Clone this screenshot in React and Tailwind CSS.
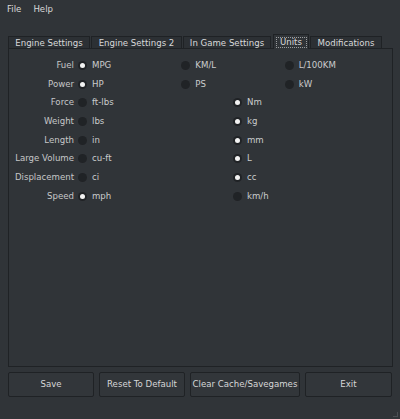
import React from "react";

const rows3 = [
  { label: "Fuel", opts: ["MPG", "KM/L", "L/100KM"], sel: 0 },
  { label: "Power", opts: ["HP", "PS", "kW"], sel: 0 },
];
const rows2 = [
  { label: "Force", opts: ["ft-lbs", "Nm"], sel: 1 },
  { label: "Weight", opts: ["lbs", "kg"], sel: 1 },
  { label: "Length", opts: ["in", "mm"], sel: 1 },
  { label: "Large Volume", opts: ["cu-ft", "L"], sel: 1 },
  { label: "Displacement", opts: ["ci", "cc"], sel: 1 },
  { label: "Speed", opts: ["mph", "km/h"], sel: 0 },
];

function Radio({ checked, text }) {
  return (
    <div className="flex items-center gap-[5px]">
      <span className="flex h-[9px] w-[9px] items-center justify-center rounded-full bg-[#202326]">
        {checked && <span className="h-[5px] w-[5px] rounded-full bg-[#f2f2f2]" />}
      </span>
      <span className="text-[#cbcccd]">{text}</span>
    </div>
  );
}

function Row({ r, cols }) {
  return (
    <div className="flex h-[18.7px] items-center">
      <div className="w-[66px] pr-[1px] text-right text-[#c6c7c8]">{r.label}</div>
      <div className={`ml-[3px] grid flex-1 pr-[4px] ${cols === 3 ? "grid-cols-3" : "grid-cols-2"}`}>
        {r.opts.map((o, i) => (
          <Radio key={o} checked={i === r.sel} text={o} />
        ))}
      </div>
    </div>
  );
}

const tabs = [
  { t: "Engine Settings", c: "w-[82px]" },
  { t: "Engine Settings 2", c: "ml-[1px] w-[91px]" },
  { t: "In Game Settings", c: "ml-[1px] w-[88px]" },
  { t: "Units", sel: true },
  { t: "Modifications", c: "ml-[1px] w-[72px]" },
];

export default function App() {
  return (
    <div
      className="relative flex h-[419px] w-[400px] flex-col overflow-hidden bg-[#303438] text-[8.6px] leading-none text-[#d8d9da]"
      style={{ fontFamily: '"DejaVu Sans", "Liberation Sans", sans-serif' }}
    >
      <div className="flex h-[18px] items-center gap-[12px] px-[7px]">
        <span>File</span>
        <span>Help</span>
      </div>
      <div className="mt-[17px] flex h-[14px] items-end pl-[8px]">
        {tabs.map(({ t, c, sel }) =>
          sel ? (
            <div
              key={t}
              className="relative z-10 ml-[2px] flex h-[15px] w-[36px] items-center justify-center border border-b-0 border-[#1f2225] bg-[#303438]"
            >
              <span className="flex h-[11px] w-[31px] items-center justify-center border border-dotted border-[#9a9c9e] pt-[1px]">{t}</span>
            </div>
          ) : (
            <div
              key={t}
              className={`${c} flex h-[13px] items-center justify-center border border-b-0 border-[#1f2225] bg-[#2c3034] pt-[1px]`}
            >
              {t}
            </div>
          )
        )}
      </div>
      <div className="mx-[8px] -mt-[1px] flex h-[319px] w-[385px] flex-col border border-[#1f2225] pt-[7px]">
        {rows3.map((r) => (
          <Row key={r.label} r={r} cols={3} />
        ))}
        {rows2.map((r) => (
          <Row key={r.label} r={r} cols={2} />
        ))}
      </div>
      <div className="mt-[5px] flex gap-[5px] pl-[8px]">
        {[
          ["Save", "w-[86px]"],
          ["Reset To Default", "w-[86px]"],
          ["Clear Cache/Savegames", "w-[110px]"],
          ["Exit", "w-[87px]"],
        ].map(([t, w]) => (
          <div
            key={t}
            className={`${w} flex h-[25px] items-center justify-center rounded-[2px] border border-[#1f2225] bg-[#32363a] text-[#d6d7d8]`}
          >
            {t}
          </div>
        ))}
      </div>
      <div className="absolute bottom-[2px] right-[2px] h-[5px] w-[5px] border-b border-r border-[#4a4e52]" />
    </div>
  );
}
